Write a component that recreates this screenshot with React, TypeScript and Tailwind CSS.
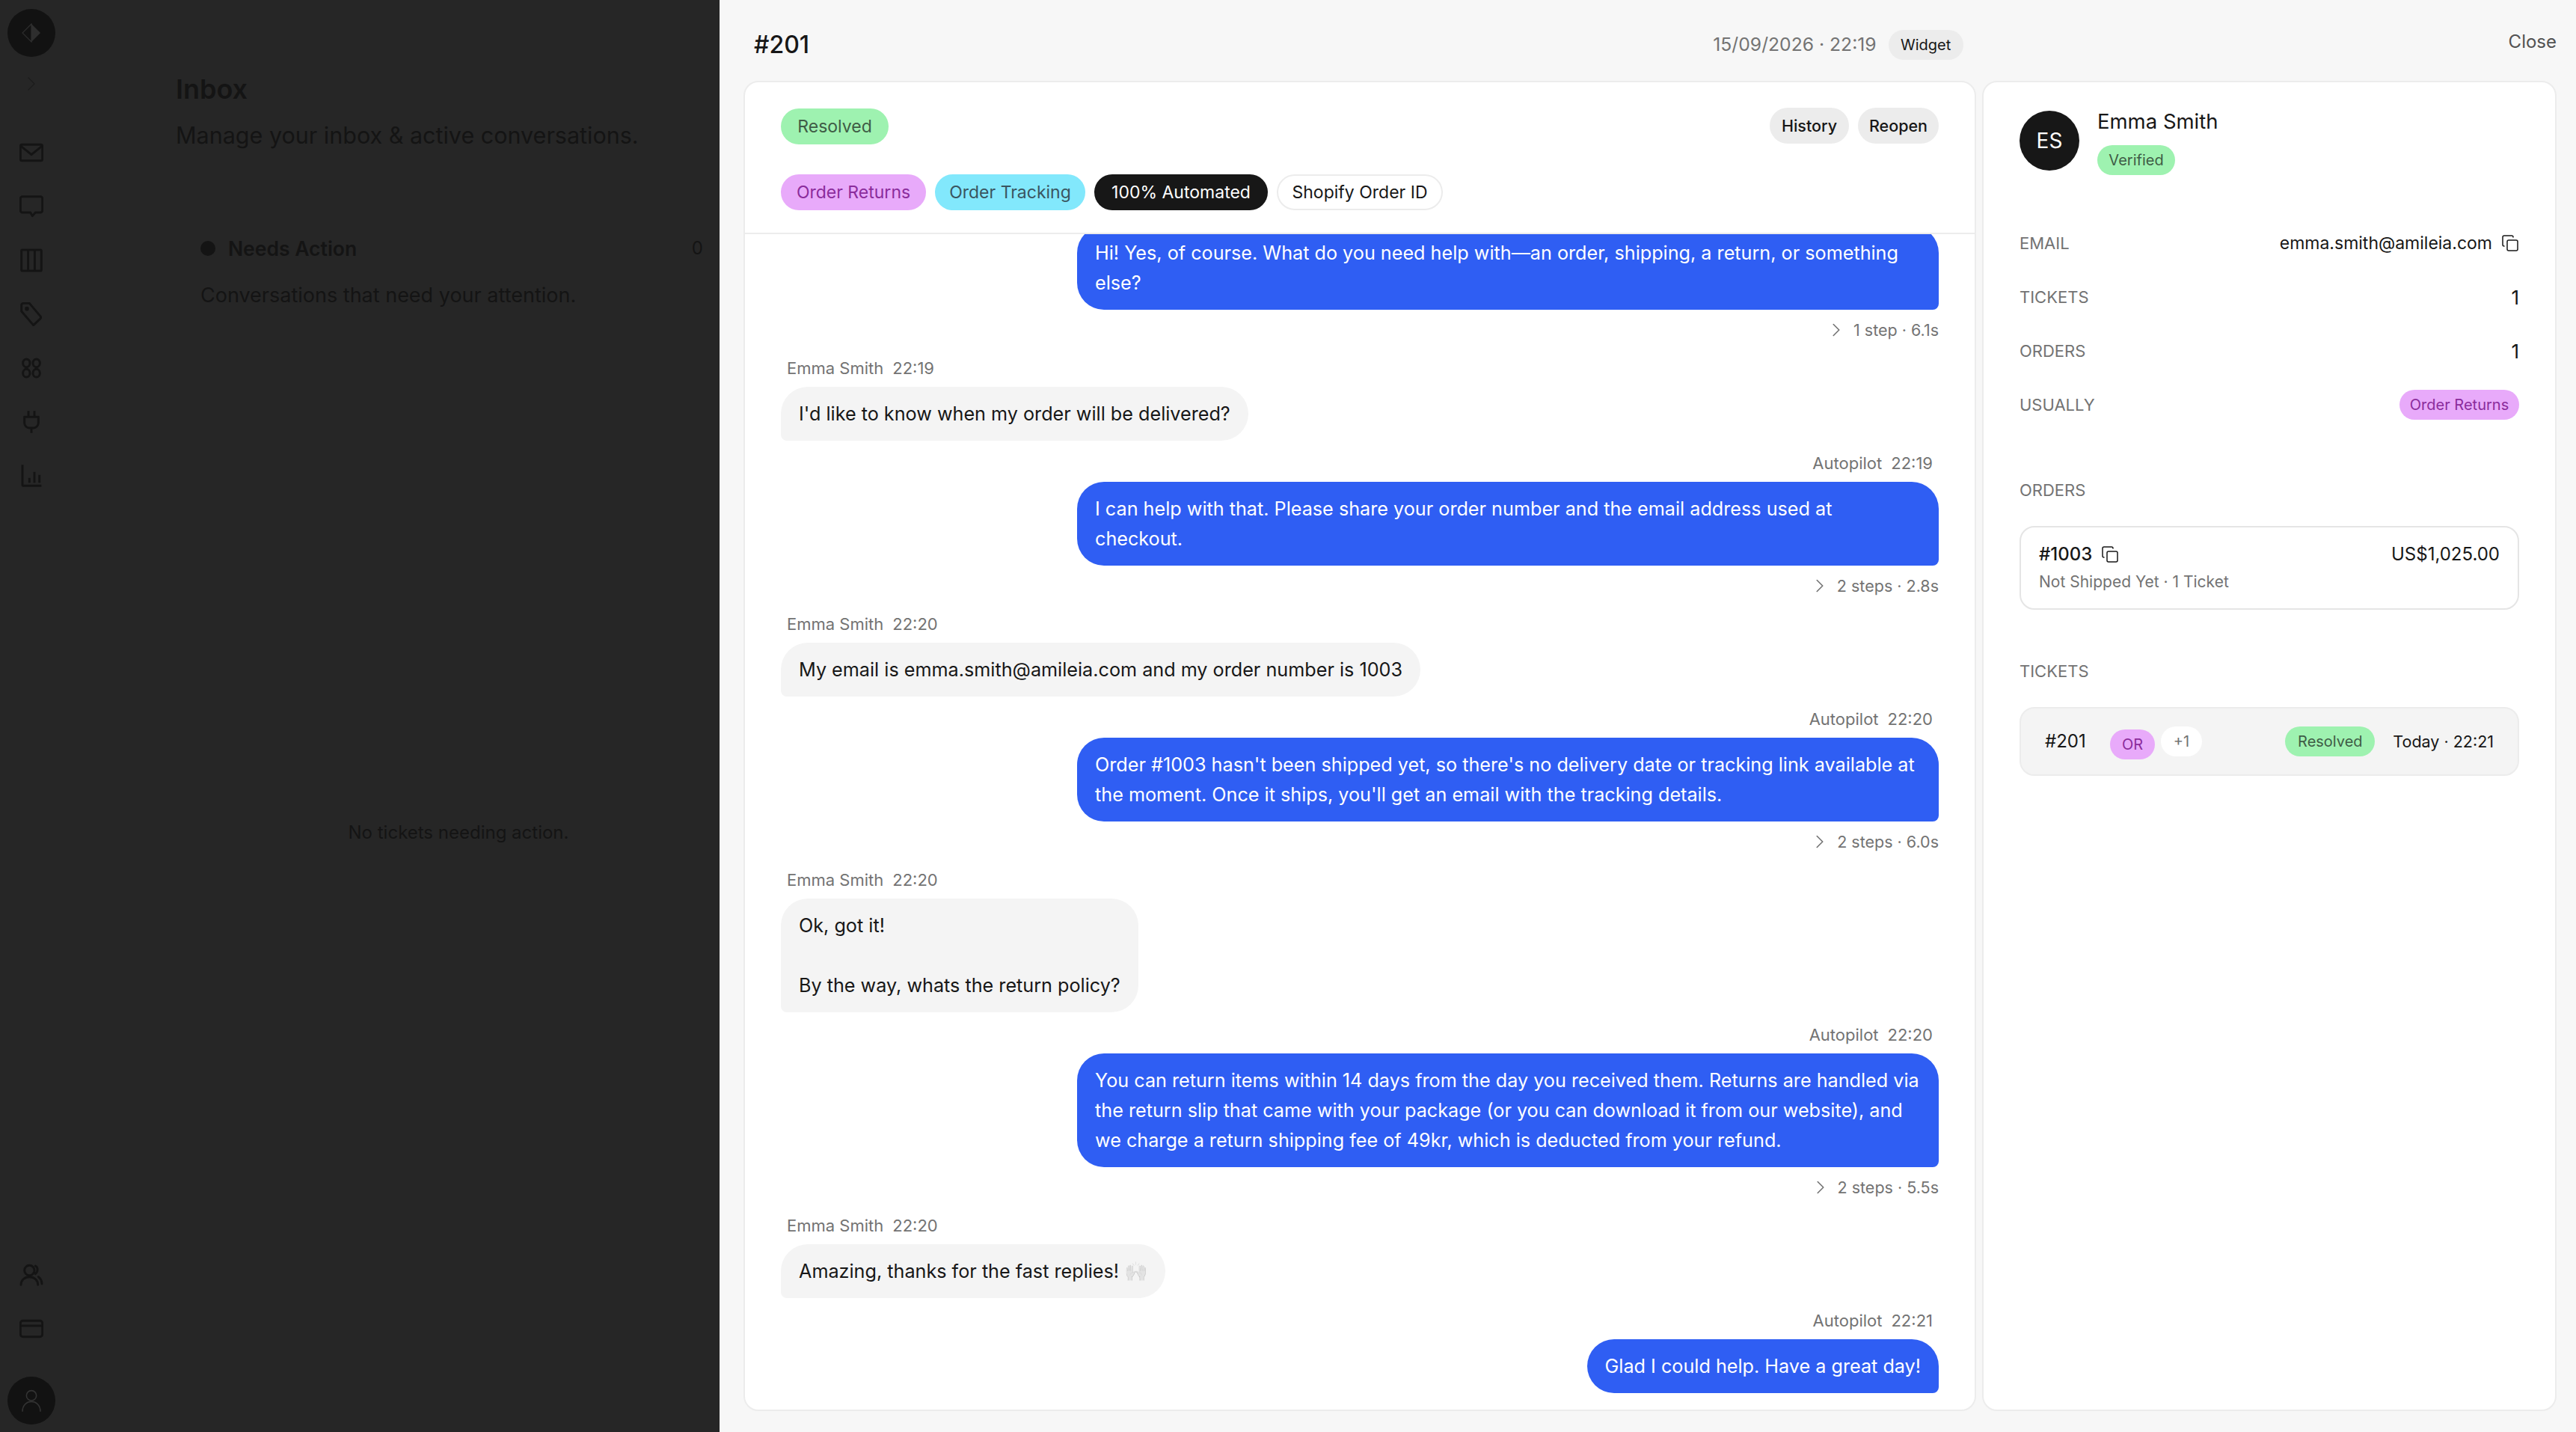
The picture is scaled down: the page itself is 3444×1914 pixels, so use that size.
import {ChevronRight, Copy} from "lucide-react";

const FONT = "font-['Inter','Noto_Sans',sans-serif]";

const navIcons = [
    <svg key="mail" width="32" height="32" viewBox="0 0 24 24" fill="none" stroke="#141414" strokeWidth="2.200" strokeLinejoin="round"><rect x="1" y="4" width="22" height="16" rx="1.5"/><path d="M1.500 5.500l10.500 8.500 10.500-8.500"/></svg>,
    <svg key="chat" width="32" height="32" viewBox="0 0 24 24" fill="none" stroke="#141414" strokeWidth="2.200" strokeLinejoin="round"><path d="M3 2h18a2 2 0 0 1 2 2v12a2 2 0 0 1-2 2h-5l-3 3.500-2-3.500H3a2 2 0 0 1-2-2V4a2 2 0 0 1 2-2z"/></svg>,
    <svg key="board" width="32" height="32" viewBox="0 0 24 24" fill="none" stroke="#141414" strokeWidth="2.200"><rect x="2" y="1.500" width="20" height="21" rx="1"/><path d="M8.700 1.500v21M15.300 1.500v21"/></svg>,
    <svg key="tag" width="32" height="32" viewBox="0 0 24 24" fill="none" stroke="#141414" strokeWidth="2.200" strokeLinejoin="round"><path d="M4 1h6l11 13a2 2 0 0 1 0 2.400L14 23 2 9V3a2 2 0 0 1 2-2z"/><circle cx="7.500" cy="6.500" r="1"/></svg>,
    <svg key="apps" width="32" height="32" viewBox="0 0 24 24" fill="none" stroke="#141414" strokeWidth="2.200"><ellipse cx="7" cy="7" rx="3.500" ry="4"/><ellipse cx="17" cy="7" rx="3.500" ry="4"/><ellipse cx="7" cy="17" rx="3.500" ry="4"/><ellipse cx="17" cy="17" rx="3.500" ry="4"/></svg>,
    <svg key="plug" width="32" height="32" viewBox="0 0 24 24" fill="none" stroke="#141414" strokeWidth="2.200" strokeLinejoin="round"><path d="M9 1v6M15 1v6M5 7h14v6a5 5 0 0 1-5 5h-4a5 5 0 0 1-5-5V7zM12 18v5"/></svg>,
    <svg key="chart" width="32" height="32" viewBox="0 0 24 24" fill="none" stroke="#141414" strokeWidth="2.200"><path d="M3 1v20a1 1 0 0 0 1 1h18M10 14v5M15 8v11M20 11v8"/></svg>,
];

function Pill({className, children}: {className: string; children: React.ReactNode}) {
    return <span className={`inline-flex items-center justify-center rounded-full ${className}`}>{children}</span>;
}

function Sidebar() {
    return (
        <aside className="flex h-full w-[84px] shrink-0 flex-col items-center pt-3 pb-[10px]">
            <div className="flex h-16 w-16 items-center justify-center rounded-full bg-[#121212]">
                <svg width="26" height="26" viewBox="0 0 26 26"><path d="M13 1 L1 13 L13 25 Z" fill="none" stroke="#2e2e2e" strokeWidth="1.2"/><path d="M13 1 L25 13 L13 25 Z" fill="#2e2e2e"/></svg>
            </div>
            <ChevronRight className="mt-5 h-8 w-8 text-[#1c1c1c]" strokeWidth={1}/>
            <nav className="mt-[60px] flex flex-col items-center gap-10">
                {navIcons}
            </nav>
            <div className="mt-auto flex flex-col items-center">
                <svg width="32" height="32" viewBox="0 0 24 24" fill="none" stroke="#141414" strokeWidth="2.200" strokeLinecap="round"><circle cx="10" cy="7.500" r="5"/><path d="M1.500 22c0-4.500 3.500-8 8.500-8s8.500 3.500 8.500 8M16 3c2.500 1 3 5.500 0 8M19 14c2 1.500 3.500 4 3.500 7"/></svg>
                <svg className="mt-10" width="32" height="32" viewBox="0 0 24 24" fill="none" stroke="#141414" strokeWidth="2.200"><rect x="1" y="4" width="22" height="16" rx="2.500"/><path d="M1 9h22"/></svg>
                <div className="mt-12 flex h-16 w-16 items-center justify-center rounded-full bg-[#121212]">
                    <svg width="32" height="32" viewBox="0 0 24 24" fill="none" stroke="#333" strokeWidth="1.200"><circle cx="12" cy="7" r="5"/><path d="M3 23c0-6 4-10 9-10s9 4 9 10"/></svg>
                </div>
            </div>
        </aside>
    );
}

function InboxBackdrop() {
    return (
        <section className="relative flex h-full w-[962px] shrink-0 bg-[#262626] text-[#141414]">
            <Sidebar/>
            <div className="flex min-w-0 flex-1 flex-col pl-[151px] pr-3 pt-[97px]">
                <h1 className="text-[36px] leading-[44px] font-semibold">Inbox</h1>
                <p className="mt-[21px] text-[30.500px] leading-[38px]">Manage your inbox &amp; active conversations.</p>
                <div className="mt-[114px] flex items-center justify-between pl-[33px]">
                    <div className="flex items-center gap-[17px]">
                        <span className="h-5 w-5 rounded-full bg-[#141414]"/>
                        <span className="text-[26.500px] leading-[34px] font-semibold">Needs Action</span>
                    </div>
                    <span className="mr-[10px] text-[24px]">0</span>
                </div>
                <p className="mt-[27px] pl-[33px] text-[27px] leading-[36px]">Conversations that need your attention.</p>
                <p className="mt-[684px] pl-[41px] text-center text-[24px] leading-[32px]">No tickets needing action.</p>
            </div>
        </section>
    );
}

type Msg =
    | {from: "user"; time: string; lines: React.ReactNode}
    | {from: "bot"; time: string; lines: React.ReactNode; steps?: string};

const messages: Msg[] = [
    {from: "bot", time: "22:19", steps: "1 step · 6.1s", lines: "Hi! Yes, of course. What do you need help with—an order, shipping, a return, or something else?"},
    {from: "user", time: "22:19", lines: "I'd like to know when my order will be delivered?"},
    {from: "bot", time: "22:19", steps: "2 steps · 2.8s", lines: "I can help with that. Please share your order number and the email address used at checkout."},
    {from: "user", time: "22:20", lines: "My email is emma.smith@amileia.com and my order number is 1003"},
    {from: "bot", time: "22:20", steps: "2 steps · 6.0s", lines: "Order #1003 hasn't been shipped yet, so there's no delivery date or tracking link available at the moment. Once it ships, you'll get an email with the tracking details."},
    {from: "user", time: "22:20", lines: <>Ok, got it!<br/><br/>By the way, whats the return policy?</>},
    {from: "bot", time: "22:20", steps: "2 steps · 5.5s", lines: "You can return items within 14 days from the day you received them. Returns are handled via the return slip that came with your package (or you can download it from our website), and we charge a return shipping fee of 49kr, which is deducted from your refund."},
    {from: "user", time: "22:20", lines: <>Amazing, thanks for the fast replies! <span className="opacity-40 grayscale">🙌</span></>},
    {from: "bot", time: "22:21", lines: "Glad I could help. Have a great day!"},
];

function Message({msg}: {msg: Msg}) {
    if (msg.from === "user") {
        return (
            <div className="mt-[27px] flex flex-col items-start">
                <div className="mb-[13px] flex gap-3 pl-2 text-[22px] leading-6 text-[#737373]">
                    <span>Emma Smith</span><span>{msg.time}</span>
                </div>
                <div className="w-fit max-w-[1152px] rounded-[36px] rounded-bl-[8px] bg-[#f4f4f4] px-6 py-4 text-[25.200px] leading-10 text-[#171717]">
                    {msg.lines}
                </div>
            </div>
        );
    }
    return (
        <div className="mt-[18px] flex flex-col items-end">
            <div className="mb-[13px] flex gap-3 pr-2 text-[22px] leading-6 text-[#737373]">
                <span>Autopilot</span><span>{msg.time}</span>
            </div>
            <div className="w-fit max-w-[1152px] rounded-[36px] rounded-br-[8px] bg-[#2f5ef3] px-6 py-4 text-[25.200px] leading-10 text-white">
                {msg.lines}
            </div>
            {msg.steps && (
                <div className="mt-[15px] flex items-center gap-2 text-[21.500px] leading-6 text-[#737373]">
                    <ChevronRight className="-my-[3px] h-[30px] w-[30px]" strokeWidth={1.300}/>
                    <span>{msg.steps}</span>
                </div>
            )}
        </div>
    );
}

function ChatCard() {
    return (
        <div className="flex h-full w-[1648px] min-w-0 shrink-0 flex-col overflow-hidden rounded-[20px] border-2 border-[#ececec] bg-white">
            <div className="flex shrink-0 flex-col gap-10 border-b-2 border-[#ececec] pb-[30px] pl-[48px] pr-[48px] pt-[35px]">
                <div className="flex items-center justify-between">
                    <Pill className="h-12 w-[144px] bg-[#9ef2b0] text-[23px] text-[#3f5c46]">Resolved</Pill>
                    <div className="-mt-[2px] flex gap-3">
                        <Pill className="h-12 w-[106px] bg-[#ececec] text-[21.500px] font-medium text-[#171717]">History</Pill>
                        <Pill className="h-12 w-[108px] bg-[#ececec] text-[21.500px] font-medium text-[#171717]">Reopen</Pill>
                    </div>
                </div>
                <div className="flex items-center gap-3">
                    <Pill className="h-12 w-[194px] bg-[#e8aafa] text-[23px] text-[#8b2c9c]">Order Returns</Pill>
                    <Pill className="h-12 w-[201px] bg-[#82e8fc] text-[23px] text-[#3a5560]">Order Tracking</Pill>
                    <Pill className="h-12 w-[232px] bg-[#171717] text-[23px] text-white">100% Automated</Pill>
                    <Pill className="h-12 w-[222px] border-2 border-[#ececec] bg-white text-[23px] text-[#171717]">Shopify Order ID</Pill>
                </div>
            </div>
            <div className="flex min-h-0 flex-1 flex-col justify-end overflow-hidden pb-[22px] pl-[48px] pr-[48px]">
                {messages.map((m, i) => <Message key={i} msg={m}/>)}
            </div>
        </div>
    );
}

function InfoRow({label, children}: {label: string; children: React.ReactNode}) {
    return (
        <div className="flex h-[40px] items-center justify-between">
            <span className="text-[22px] text-[#737373]">{label}</span>
            {children}
        </div>
    );
}

function CustomerCard() {
    return (
        <div className="flex h-full w-[768px] shrink-0 flex-col rounded-[20px] border-2 border-[#ececec] bg-white px-[48px] pt-[38px]">
            <div className="flex items-start gap-6">
                <div className="flex h-20 w-20 items-center justify-center rounded-full bg-[#171717] text-[28px] text-white">ES</div>
                <div>
                    <div className="text-[27.500px] leading-[28px] text-[#171717]">Emma Smith</div>
                    <Pill className="mt-[18px] h-10 w-[104px] bg-[#9ef2b0] text-[20px] text-[#3f5c46]">Verified</Pill>
                </div>
            </div>
            <div className="mt-[71px] flex flex-col gap-[32px]">
                <InfoRow label="EMAIL">
                    <span className="flex items-center gap-3 text-[23px] text-[#171717]">emma.smith@amileia.com <Copy className="h-6 w-6" strokeWidth={1.500}/></span>
                </InfoRow>
                <InfoRow label="TICKETS"><span className="text-[26px] text-[#171717]">1</span></InfoRow>
                <InfoRow label="ORDERS"><span className="text-[26px] text-[#171717]">1</span></InfoRow>
                <InfoRow label="USUALLY">
                    <Pill className="h-10 w-[160px] bg-[#e8aafa] text-[20px] text-[#8b2c9c]">Order Returns</Pill>
                </InfoRow>
            </div>
            <div className="mt-[80px] text-[22px] leading-7 text-[#737373]">ORDERS</div>
            <div className="mt-[34px] h-[112px] rounded-[20px] border-2 border-[#e5e5e5] px-6 pt-5">
                <div className="flex items-center justify-between">
                    <span className="flex items-center gap-3 text-[24px] leading-8 font-medium text-[#171717]">#1003 <Copy className="h-6 w-6" strokeWidth={1.500}/></span>
                    <span className="text-[24px] leading-8 text-[#171717]">US$1,025.00</span>
                </div>
                <div className="mt-[7px] text-[21px] leading-7 text-[#737373]">Not Shipped Yet · 1 Ticket</div>
            </div>
            <div className="mt-[68px] text-[22px] leading-7 text-[#737373]">TICKETS</div>
            <div className="mt-[34px] flex h-[92px] items-center rounded-[20px] border-2 border-[#ececec] bg-[#f4f4f4] pl-[32px] pr-[32px]">
                <span className="w-[87px] text-[24px] text-[#171717]">#201</span>
                <Pill className="mt-[8px] h-10 w-[60px] bg-[#e8aafa] text-[20px] text-[#8b2c9c]">OR</Pill>
                <Pill className="ml-2 h-10 w-[55px] bg-white text-[20px] text-[#737373]">+1</Pill>
                <Pill className="ml-auto h-10 w-[120px] bg-[#9ef2b0] text-[20px] text-[#3f5c46]">Resolved</Pill>
                <span className="ml-6 text-[21.500px] text-[#171717]">Today · 22:21</span>
            </div>
        </div>
    );
}

export default function App() {
    return (
        <div className={`flex h-[1914px] w-[3444px] overflow-hidden bg-[#f7f7f7] ${FONT}`}>
            <InboxBackdrop/>
            <main className="flex min-w-0 flex-1 flex-col pl-[32px] pr-[26px] pb-[28px]">
                <header className="flex h-[108px] shrink-0 items-start">
                    <h2 className="pl-[14px] pt-[40px] text-[32px] leading-10 font-medium text-[#171717]">#201</h2>
                    <div className="ml-auto mr-[729px] mt-[40px] flex items-center gap-4">
                        <span className="text-[24.700px] text-[#737373]">15/09/2026 · 22:19</span>
                        <Pill className="h-10 w-[100px] bg-[#ececec] text-[20px] text-[#171717]">Widget</Pill>
                    </div>
                    <span className="mt-[40px] text-[24px] leading-8 text-[#525252]">Close</span>
                </header>
                <div className="flex min-h-0 flex-1 gap-[8px]">
                    <ChatCard/>
                    <CustomerCard/>
                </div>
            </main>
        </div>
    );
}
